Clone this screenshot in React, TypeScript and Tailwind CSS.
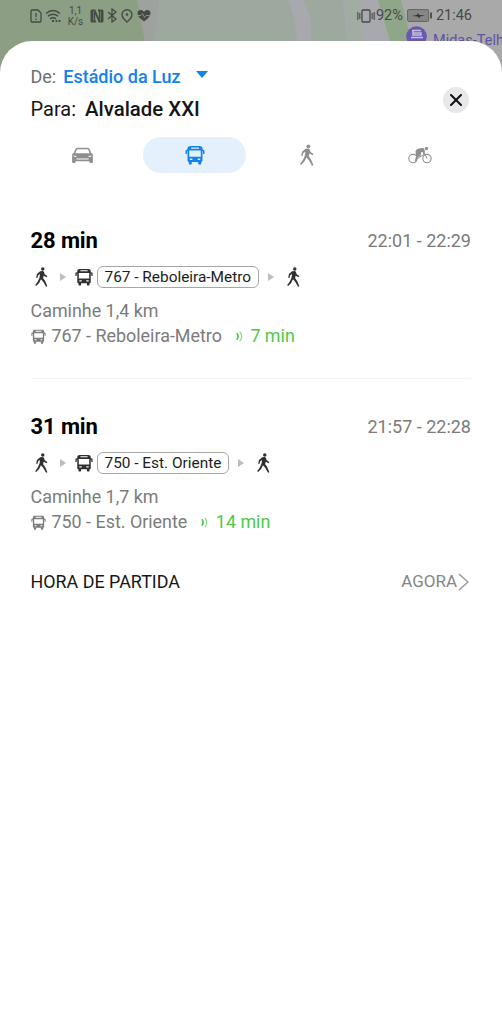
import { useState } from "react";

type Route = {
  duration: string;
  time: string;
  line: string;
  walk: string;
  next: string;
};

const routes: Route[] = [
  {
    duration: "28 min",
    time: "22:01 - 22:29",
    line: "767 - Reboleira-Metro",
    walk: "Caminhe 1,4 km",
    next: "7 min",
  },
  {
    duration: "31 min",
    time: "21:57 - 22:28",
    line: "750 - Est. Oriente",
    walk: "Caminhe 1,7 km",
    next: "14 min",
  },
];

function BusIcon({ className }: { className: string }) {
  return (
    <svg viewBox="0 0 20 20" className={className} fill="currentColor">
      <path
        fillRule="evenodd"
        d="M5.200 1h9.600c1.700 0 2.700.9 2.700 2.500v11.700c0 1-.7 1.800-1.700 1.800H4.200c-1 0-1.700-.8-1.700-1.800V3.500C2.500 1.900 3.500 1 5.200 1zM6 2.400v1.300h8V2.400zM4.200 5.500v6.200h11.600V5.500zM4.800 13.500v1.500h2.600v-1.500zM12.600 13.500v1.500h2.600v-1.500z"
      />
      <path d="M3.800 16.500h3v2.200c0 .5-.3.800-.8.800H4.600c-.5 0-.8-.3-.8-.8zM13.200 16.500h3v2.200c0 .5-.3.800-.8.800H14c-.5 0-.8-.3-.8-.8z" />
      <path d="M3 4.300 1.200 5Q.5 5.300.5 6v3h1.400V6.300L3 6zM17 4.300l1.800.7q.7.300.7 1v3h-1.400V6.300L17 6z" />
    </svg>
  );
}

function WalkIcon({ className }: { className: string }) {
  return (
    <svg viewBox="0 0 14 22" className={className} fill="currentColor">
      <circle cx="8.400" cy="2.300" r="1.900" />
      <path d="M5.500 4.700 8.500 4.400q1 .2 1.300 1.300l.7 2.300 2.900 2-.5 1.200-3.600-1.700-.5 2.800 2.100 2.900 2.600 6-1.500.6-3.100-5.500-2.500-2.700-2 3.900L1.100 21 0 20l2.900-4 1.900-4.300.6-4L3.300 9l-.8 3-1.300-.3.800-3.900z" />
    </svg>
  );
}

function CarIcon() {
  return (
    <svg viewBox="0 0 24 18" className="h-[17px] w-[23px]" fill="currentColor">
      <path
        fillRule="evenodd"
        d="M7 .8h10c1.400 0 2.200.5 2.700 1.700l1.400 3.700c1.300.5 1.900 1.400 1.900 2.700v7c0 .6-.4 1-1 1h-1.700c-.6 0-1-.4-1-1v-.8H4.700v.8c0 .6-.4 1-1 1H2c-.6 0-1-.4-1-1V8.900c0-1.300.6-2.200 1.900-2.700l1.400-3.700C4.800 1.300 5.600.8 7 .8zM7 2.300c-.7 0-1.100.3-1.300.9L4.500 6.500h15l-1.200-3.300c-.2-.6-.6-.9-1.300-.9zM5.500 12.200v1h13v-1zM2.500 9v1l3 .5v-.9zM21.500 9l-3 .6v.9l3-.5z"
      />
    </svg>
  );
}

function BikeIcon() {
  return (
    <svg viewBox="0 0 24 18" className="h-[18px] w-6" fill="none" stroke="currentColor">
      <circle cx="5" cy="12.600" r="4.200" strokeWidth="1.100" />
      <circle cx="19" cy="12.600" r="4.200" strokeWidth="1.100" />
      <circle cx="18.500" cy="2.500" r="1.700" fill="currentColor" stroke="none" />
      <path d="M9 3.300q4-1.500 6.500-1.300l1.300 2.300-.2 4.200h-1.300l-.5-2.500-1.600.2-.7 3.700-3 1.500-1.200 4.200H6.700l1.300-5L7.500 5z" fill="currentColor" stroke="none" />
      <path d="M8.500 13l7.500-4.500M16.300 6.500l2.700 6" strokeWidth="1" />
    </svg>
  );
}

function Arrow() {
  return (
    <svg viewBox="0 0 6 8" className="h-2 w-1.5" fill="#bdbdbd">
      <path d="M0 0l6 4-6 4z" />
    </svg>
  );
}

function LiveIcon() {
  return (
    <svg viewBox="0 0 7 11" className="ml-[14px] h-[11px] w-[7px]" fill="none" stroke="#4cc94c">
      <path d="M.8 2.300q2.600 3.200 0 6.400" strokeWidth="1.700" />
      <path d="M3.800.8q4 4.700 0 9.400" strokeWidth="1.100" opacity=".7" />
    </svg>
  );
}

function MapBackground() {
  return (
    <svg viewBox="0 0 502 90" className="absolute top-0 left-0 h-[90px] w-[502px]">
      <rect width="502" height="90" fill="#a9a9a9" />
      <path d="M0 0h139l6 41v49H0z" fill="#8c9f85" />
      <path d="M139 0h205l4 41v49H145V41z" fill="#9da89e" />
      <path d="M137 0h22l-5 41h-9z" fill="#9ea29e" />
      <path d="M288 0h16l7 20v21h-14q-1-20-9-41zM343 0h39l10 41h-45z" fill="#a8a9ae" />
      <path d="M346 0h14l3 41h-15z" fill="#a1aca2" />
      <path d="M378 0h23l10 41h-21z" fill="#8fa688" />
    </svg>
  );
}

function StatusBar() {
  return (
    <div className="relative flex h-[31px] items-center pr-[30px] pl-[30px] text-[#454a45]">
      <svg viewBox="0 0 12 14" className="h-[14px] w-[12px]" fill="none" stroke="currentColor" strokeWidth="1.300">
        <path d="M1 2q0-1 1-1h6l3 3v8q0 1-1 1H2q-1 0-1-1z" />
        <path d="M6 4v4M6 9.500V11" />
      </svg>
      <svg viewBox="0 0 17 14" className="ml-[3px] h-[14px] w-[17px]" fill="none" stroke="currentColor" strokeWidth="1.500">
        <path d="M1 4.500q7-6 14 0M3 7.200q5-4 10 0M5 9.800q3-2.300 6 0" />
        <path d="M7 12h2M10.500 12h1.800M13.500 12h2" strokeWidth="2" />
      </svg>
      <div className="ml-[5px] w-[17px] text-center text-[10px] leading-[11px]">
        <div>1,1</div>
        <div>K/s</div>
      </div>
      <svg viewBox="0 0 14 14" className="ml-[6px] h-[14px] w-[14px]">
        <path d="M2 .5h3.200l3.600 8.300V3.200L7.500.5H12q1.500 0 1.500 1.500v10q0 1.500-1.500 1.500H8.800L5.200 5.200v5.600l1.300 2.700H2Q.5 13.500.5 12V2Q.5.500 2 .5z" fill="currentColor" />
        <path d="M3.500 2v10M10.500 2v10" stroke="#7a8a76" strokeWidth=".7" />
      </svg>
      <svg viewBox="0 0 10 15" className="ml-[3px] h-[15px] w-[10px]" fill="none" stroke="currentColor" strokeWidth="1.300">
        <path d="M1 4l8 7-4 3V1l4 3-8 7" />
      </svg>
      <svg viewBox="0 0 12 14" className="ml-[4px] h-[14px] w-[12px]" fill="none" stroke="currentColor" strokeWidth="1.400">
        <path d="M6 13Q1 9 1 5.500a5 4.700 0 0 1 10 0Q11 9 6 13z" />
        <circle cx="6" cy="5.500" r="1.300" fill="currentColor" stroke="none" />
      </svg>
      <svg viewBox="0 0 14 13" className="ml-[4px] h-[13px] w-[14px]">
        <path d="M7 12.500Q.5 8 .5 4.200C.5.500 5 0 7 3c2-3 6.500-2.500 6.500 1.200Q13.500 8 7 12.500z" fill="currentColor" />
        <path d="M0 6.500h4l1.500-2 2 4 1.500-2h5" fill="none" stroke="#92a18c" strokeWidth=".8" />
      </svg>

      <svg viewBox="0 0 18 14" className="ml-auto h-[14px] w-[18px]" fill="none" stroke="currentColor">
        <rect x="5" y="1" width="8" height="12" rx="1" strokeWidth="1.300" />
        <path d="M.8 3v8M2.800 4v6M17.200 3v8M15.200 4v6" strokeWidth="1.100" />
      </svg>
      <span className="ml-px pt-px text-[14.500px]">92%</span>
      <svg viewBox="0 0 26 13" className="ml-[4px] h-[13px] w-[26px]">
        <rect x=".6" y=".6" width="21" height="11.800" rx="1" fill="#858785" stroke="#626462" />
        <path d="M5 7l5-1 1-2 1 2 6 .5-5 1-1 2-1-2z" fill="#303330" />
        <path d="M24 3.500v6" stroke="#505350" strokeWidth="2" />
      </svg>
      <span className="ml-[3px] pt-px text-[14.500px]">21:46</span>
    </div>
  );
}

function RouteOption({ route }: { route: Route }) {
  return (
    <div className="pr-[31px] pl-[30.500px] text-[17.900px] text-[#7b7b7b]">
      <div className="flex h-[31px] items-center justify-between">
        <span className="text-[22px] font-bold tracking-[-0.100px] text-black">{route.duration}</span>
        <span className="text-[18px]">{route.time}</span>
      </div>
      <div className="mt-[10px] flex h-[22px] items-center pl-1 text-[#303030]">
        <WalkIcon className="h-5 w-[13px]" />
        <div className="ml-3">
          <Arrow />
        </div>
        <BusIcon className="ml-[9px] h-[18px] w-[18px]" />
        <span className="ml-1 flex h-[22px] items-center rounded-[6px] border-[1.500px] border-[#a6a6a6] px-[7px] pt-px text-[15.400px] whitespace-nowrap text-[#1c1c1c]">
          {route.line}
        </span>
        <div className="ml-[9px]">
          <Arrow />
        </div>
        <WalkIcon className="ml-[13px] h-5 w-[13px]" />
      </div>
      <div className="mt-[11px] flex h-[25px] items-center">{route.walk}</div>
      <div className="mb-px flex h-6 items-center">
        <BusIcon className="h-[15px] w-[15px]" />
        <span className="ml-[6px]">{route.line}</span>
        <LiveIcon />
        <span className="ml-[7.500px] text-[#4cc94c]">{route.next}</span>
      </div>
    </div>
  );
}

export default function App() {
  const [mode, setMode] = useState("bus");

  const modes = [
    { id: "car", icon: <CarIcon /> },
    { id: "bus", icon: <BusIcon className="h-5 w-5" /> },
    { id: "walk", icon: <WalkIcon className="h-[22px] w-[14px]" /> },
    { id: "bike", icon: <BikeIcon /> },
  ];

  return (
    <div className="relative h-[1024px] w-[502px] overflow-hidden bg-white font-[Roboto,sans-serif]">
      <MapBackground />
      <div className="absolute top-[26px] left-[406px] flex items-start gap-[6px] text-[14.500px] leading-[18px] whitespace-nowrap text-[#5f51a5]">
        <svg viewBox="0 0 21 21" className="h-[21px] w-[21px]">
          <circle cx="10.500" cy="10.500" r="10.300" fill="#6658b4" />
          <path d="M6 4.500h9M7 5v4h8V7H7M5 11.500h12" fill="none" stroke="#c4c0dc" strokeWidth="1.500" />
        </svg>
        <span className="pt-[6px]">Midas-Telh</span>
      </div>
      <StatusBar />

      <div className="relative mt-[10px] h-[983px] rounded-t-[32px] bg-white pt-[21px]">
        <div className="flex items-start justify-between pr-[33px] pl-[30.500px]">
          <div>
            <div className="flex h-7 items-center text-[18px]">
              <span className="text-[#707070]">De:</span>
              <span className="ml-[7px] font-medium text-[#1182ee]">Estádio da Luz</span>
              <svg viewBox="0 0 12 7" className="mb-[4px] ml-[15px] h-[7px] w-3" fill="#1182ee">
                <path d="M0 0h12L6 7z" />
              </svg>
            </div>
            <div className="mt-[3px] flex h-8 items-center text-[20px] text-[#161616]">
              <span>Para:</span>
              <span className="ml-[9px] text-[20.400px] font-medium">Alvalade XXI</span>
            </div>
          </div>
          <button className="mt-[25px] flex h-[26px] w-[26px] items-center justify-center rounded-full bg-[#e8e8e8]">
            <svg viewBox="0 0 12 12" className="h-3 w-3" stroke="#101018" strokeWidth="2" strokeLinecap="round">
              <path d="M1 1l10 10M11 1L1 11" />
            </svg>
          </button>
        </div>

        <div className="mt-3 grid grid-cols-4 px-[26px]">
          {modes.map((m) => (
            <button
              key={m.id}
              onClick={() => setMode(m.id)}
              className={
                m.id === mode
                  ? "mx-auto flex h-9 w-[103px] items-center justify-center rounded-full bg-[#e4f1fd] text-[#1182ee]"
                  : "mx-auto flex h-9 w-[103px] items-center justify-center rounded-full text-[#8f8f8f]"
              }
            >
              {m.icon}
            </button>
          ))}
        </div>

        <div className="mt-[52px]">
          <RouteOption route={routes[0]} />
          <div className="mx-[31px] mt-[30px] mb-[32px] h-px bg-[#f5f5f5]" />
          <RouteOption route={routes[1]} />
        </div>

        <div className="mt-[34px] flex h-7 items-center justify-between pr-[33px] pl-[30.500px]">
          <span className="text-[17.900px] text-[#161616]">HORA DE PARTIDA</span>
          <span className="flex items-center text-[17px] text-[#858585]">
            AGORA
            <svg viewBox="0 0 11 18" className="ml-px h-[18px] w-[11px]" fill="none" stroke="#9a9a9a" strokeWidth="1.500">
              <path d="M1 1l9 8-9 8" />
            </svg>
          </span>
        </div>
      </div>
    </div>
  );
}
